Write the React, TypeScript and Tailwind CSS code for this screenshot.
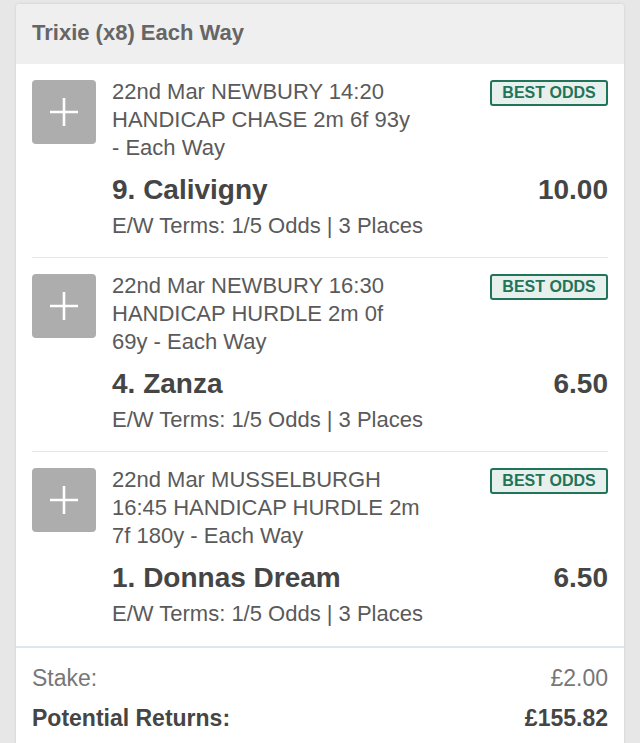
import React from "react";

type Selection = {
  event: string[];
  runner: string;
  odds: string;
};

const selections: Selection[] = [
  {
    event: ["22nd Mar NEWBURY 14:20", "HANDICAP CHASE 2m 6f 93y", "- Each Way"],
    runner: "9. Calivigny",
    odds: "10.00",
  },
  {
    event: ["22nd Mar NEWBURY 16:30", "HANDICAP HURDLE 2m 0f", "69y - Each Way"],
    runner: "4. Zanza",
    odds: "6.50",
  },
  {
    event: ["22nd Mar MUSSELBURGH", "16:45 HANDICAP HURDLE 2m", "7f 180y - Each Way"],
    runner: "1. Donnas Dream",
    odds: "6.50",
  },
];

function PlusBox() {
  return (
    <div className="flex h-16 w-16 shrink-0 items-center justify-center rounded bg-[#adadad]">
      <svg width="30" height="30" viewBox="0 0 30 30" aria-hidden="true">
        <path d="M15 1v28M1 15h28" stroke="#fff" strokeWidth="2.6" />
      </svg>
    </div>
  );
}

function SelectionRow({ item, last }: { item: Selection; last: boolean }) {
  return (
    <div className={last ? "flex gap-4 pt-4 pb-[18px]" : "flex gap-4 border-b border-[#e6e6e6] pt-4 pb-[17px]"}>
      <PlusBox />
      <div className="min-w-0 flex-1 -mt-[2px]">
        <div className="flex items-start justify-between gap-2">
          <div className="text-[22px] leading-[28px] text-[#5a5a5a]">
            {item.event.map((line) => (
              <div key={line}>{line}</div>
            ))}
          </div>
          <span className="mt-[2px] inline-flex h-[26px] w-[118px] shrink-0 items-center justify-center rounded-[3px] border-2 border-[#1f7459] bg-[#e7f0ec] text-[16px] font-bold text-[#1f7459]">
            BEST ODDS
          </span>
        </div>
        <div className="mt-[10px] flex items-center justify-between text-[28px] leading-[36px] font-bold text-[#454545]">
          <span>{item.runner}</span>
          <span>{item.odds}</span>
        </div>
        <div className="mt-[4px] text-[22px] leading-[28px] text-[#5a5a5a]">
          E/W Terms: 1/5 Odds | 3 Places
        </div>
      </div>
    </div>
  );
}

export default function App() {
  return (
    <div className="min-h-[743px] bg-[#e7e7e7] px-4 pt-1 [font-family:Liberation_Sans,Arial,sans-serif]">
      <div className="overflow-hidden rounded-t-[4px] bg-white shadow-[0_0_3px_rgba(0,0,0,0.12)]">
        <div className="h-[60px] bg-[#efefef] px-4 pt-[15px] text-[22px] leading-[28px] font-bold text-[#666]">
          Trixie (x8) Each Way
        </div>
        <div className="px-4">
          {selections.map((item, i) => (
            <SelectionRow key={item.runner} item={item} last={i === selections.length - 1} />
          ))}
        </div>
        <div className="border-t-2 border-[#dfe5ea] px-4 pt-4 pb-4 text-[23px]">
          <div className="flex justify-between leading-[28px] text-[#777]">
            <span>Stake:</span>
            <span>£2.00</span>
          </div>
          <div className="mt-[12px] flex justify-between leading-[28px] font-bold text-[#454545]">
            <span>Potential Returns:</span>
            <span>£155.82</span>
          </div>
        </div>
      </div>
    </div>
  );
}
